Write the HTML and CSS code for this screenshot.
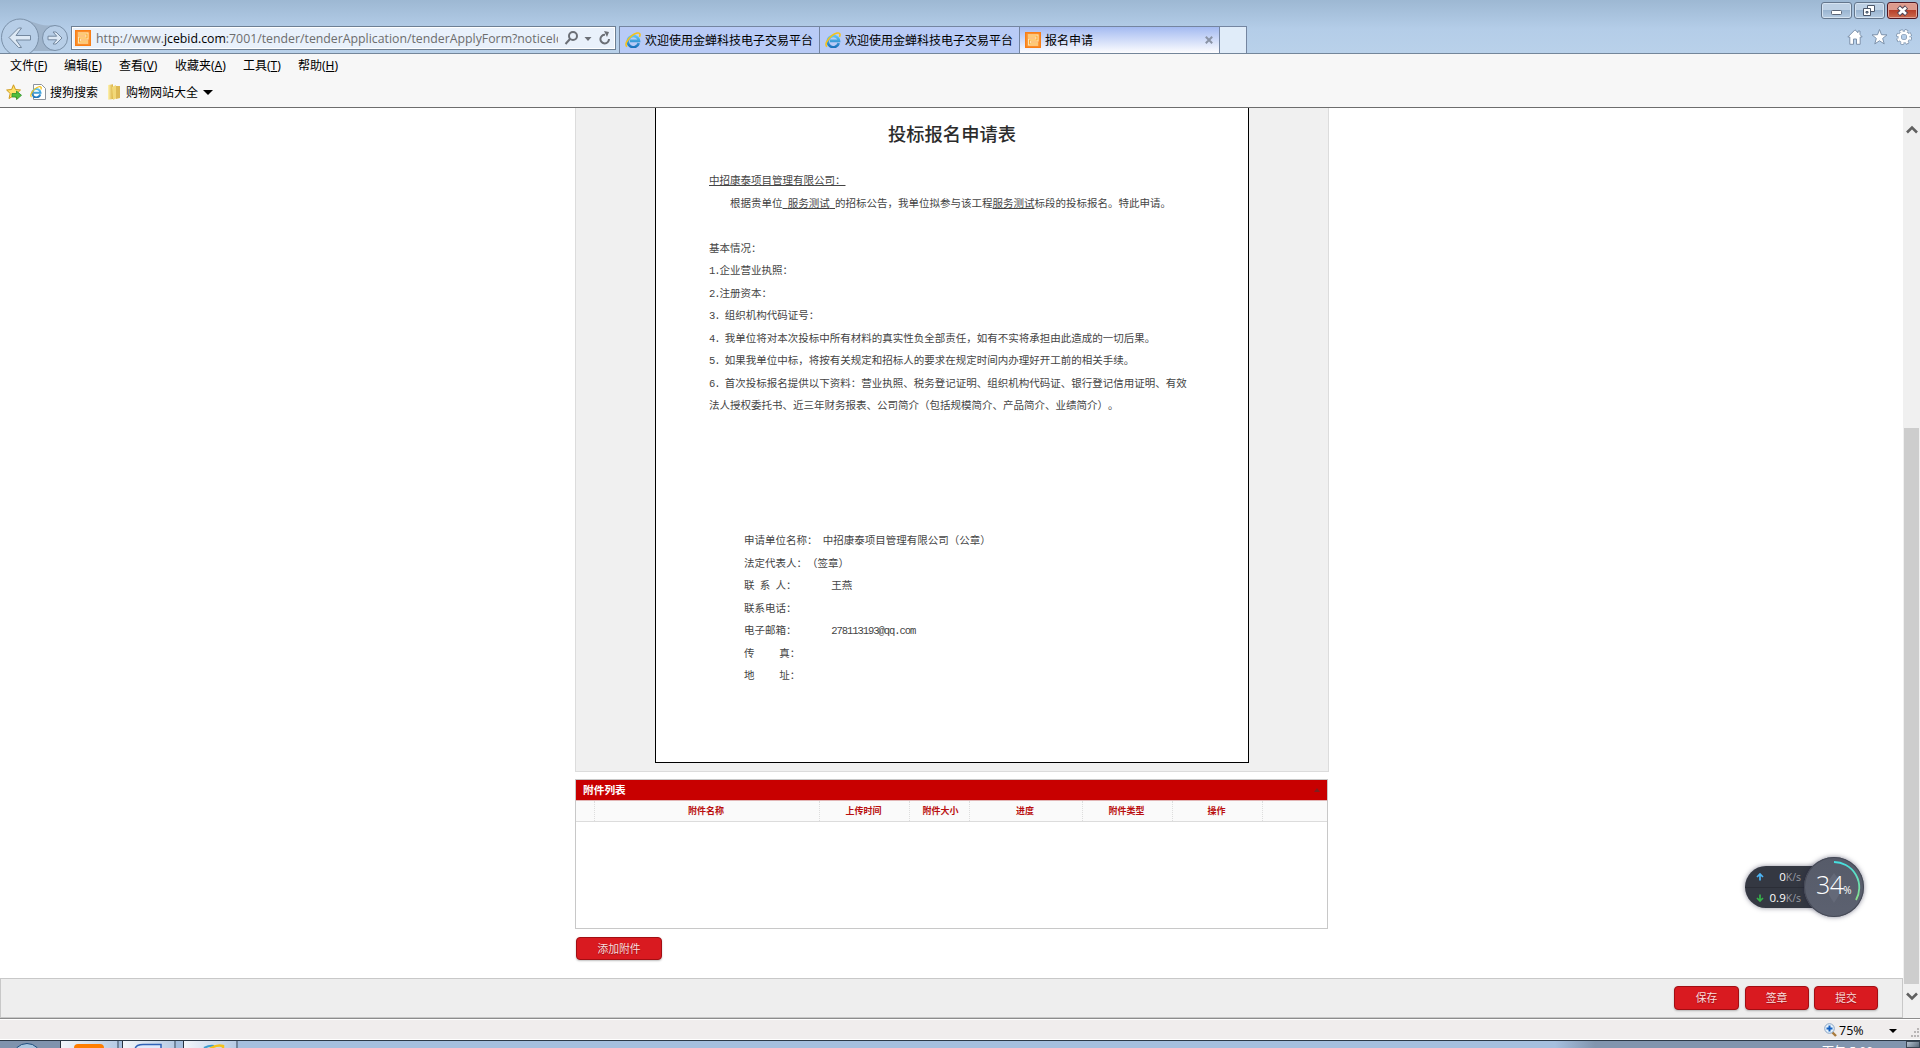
FILE: index.html
```html
<!DOCTYPE html>
<html lang="zh-CN">
<head>
<meta charset="utf-8">
<title>报名申请</title>
<link rel="stylesheet" href="styles.css">
</head>
<body>
<svg width="0" height="0" class="defs" aria-hidden="true">
  <defs>
    <linearGradient id="ieBlue" x1="0" y1="0" x2="0" y2="1"><stop offset="0" stop-color="#5cc4f2"/><stop offset="1" stop-color="#1c74bd"/></linearGradient>
    <linearGradient id="ring" x1="0" y1="0" x2="0" y2="1"><stop offset="0" stop-color="#45dfe0"/><stop offset="1" stop-color="#8be08a"/></linearGradient>
    <linearGradient id="gold" x1="0" y1="0" x2="1" y2="0"><stop offset="0" stop-color="#fff3b0"/><stop offset="1" stop-color="#d9b040"/></linearGradient>
    <symbol id="ie" viewBox="0 0 16 16">
      <path d="M13.8 11.2A5.6 5.6 0 1 1 14 8.9H5" fill="none" stroke="url(#ieBlue)" stroke-width="2.6"/>
      <path d="M2.2 14.6C-.8 13.6 2 7.4 6.6 3.8 10.2.9 14.7-.2 15 2.4c.1.8-.2 1.6-.6 2.4" fill="none" stroke="#f5c21b" stroke-width="1.6"/>
    </symbol>
    <symbol id="fav" viewBox="0 0 16 16">
      <rect width="16" height="16" fill="#f97f17"/><rect x="1.500" y="1.500" width="13" height="13" fill="#fb9a3c"/>
      <path d="M3 4h9v4H4.500v4H13" fill="none" stroke="#ffedc0" stroke-width="3"/>
      <path d="M3 4h9v4H4.500v4H13" fill="none" stroke="#fba72e" stroke-width="1.200"/>
    </symbol>
  </defs>
</svg>

<div class="screen">
  <header class="frame">
    <svg class="nav" width="71" height="53" viewBox="0 0 71 53">
      <path d="M20 19.5c14 0 17 8 35 5.500v26H33z" fill="#9fb4cb"/>
      <circle cx="20" cy="37.500" r="18.500" fill="#b7cee7" stroke="#7a90a8"/>
      <circle cx="55" cy="38" r="12.500" fill="#b7cee7" stroke="#7a90a8"/>
      <path d="M9 37.500l9.500-9.500h3L16 35.500h14.500v4.500H16l5.500 7.500h-3z" fill="#dde9f5" stroke="#74889f"/>
      <path d="M62 38l-6-6h-3l3.700 4.200H48v3.600h8.700L53 44h3z" fill="#dde9f5" stroke="#74889f"/>
    </svg>
    <div class="address">
      <svg width="16" height="16"><use href="#fav"/></svg>
      <div class="url">http://www.<b>jcebid.com</b>:7001/tender/tenderApplication/tenderApplyForm?noticeId</div>
      <svg width="50" height="18" viewBox="0 0 50 18" fill="none" stroke="#6b6f76" stroke-width="2">
        <circle cx="11" cy="7" r="4"/><path d="M8 10l-4.500 5"/><path d="M22.500 8h7L26 12z" fill="#6b6f76" stroke="none"/>
        <path d="M47 10a4.300 4.300 0 1 1-4-4.200"/><path d="M42 2l5 1-2 5z" fill="#6b6f76" stroke="none"/>
      </svg>
    </div>
    <nav class="tabs">
      <div class="tab"><svg width="16" height="16"><use href="#ie"/></svg><span>欢迎使用金蝉科技电子交易平台</span></div>
      <div class="tab"><svg width="16" height="16"><use href="#ie"/></svg><span>欢迎使用金蝉科技电子交易平台</span></div>
      <div class="tab active"><svg width="16" height="16"><use href="#fav"/></svg><span>报名申请</span>
        <svg class="close" width="8" height="8" viewBox="0 0 8 8"><path d="M.8.8l6.400 6.400M7.200.8L.8 7.200" stroke="#8a93a5" stroke-width="2"/></svg></div>
      <div class="tab new"></div>
    </nav>
    <div class="corner">
      <div class="winbtns">
        <i class="wb"><svg width="29" height="15"><rect x="9.500" y="7.500" width="10" height="4" rx="1" fill="#fff" stroke="#5b6577"/></svg></i>
        <i class="wb"><svg width="29" height="15" stroke="#4d586a"><path d="M12.500 2.500h7v6h-7z" fill="#fff"/><path d="M8.500 5.500h7v7h-7z" fill="#fff"/><path d="M11 8.500h2v1.500h-2z" fill="#8fb0d0"/></svg></i>
        <i class="wb x"><svg width="29" height="15"><path d="M10.500 4l8 7.500M18.500 4l-8 7.500" stroke="#4f4456" stroke-width="4.600"/><path d="M11 4.500l7 6.500M18 4.500L11 11" stroke="#fff" stroke-width="2.600"/></svg></i>
      </div>
      <div class="tools">
        <svg width="16" height="16" viewBox="0 0 16 16"><path d="M8 .8L.8 8h2v7.300h3.700V10h3v5.300h3.700V8h2L13 5.500V2h-2v1.700z" fill="#fff" stroke="#7d92ab"/></svg>
        <svg width="17" height="16" viewBox="0 0 16 16"><path d="M8 .5l2 5.200 5.500.2-4.300 3.500 1.500 5.500L8 11.800l-4.700 3.100 1.500-5.500L.5 5.900 6 5.700z" fill="#fff" stroke="#7d92ab"/></svg>
        <svg width="16" height="16" viewBox="0 0 16 16"><circle cx="8" cy="8" r="6.300" fill="none" stroke="#7d92ab" stroke-width="3.400" stroke-dasharray="3 1.950"/><circle cx="8" cy="8" r="4.400" fill="none" stroke="#7d92ab" stroke-width="4"/><circle cx="8" cy="8" r="6.200" fill="none" stroke="#fff" stroke-width="2" stroke-dasharray="2.400 2.470" stroke-dashoffset="-.3"/><circle cx="8" cy="8" r="4.300" fill="none" stroke="#fff" stroke-width="2.600"/></svg>
      </div>
    </div>
  </header>

  <div class="bars">
    <div class="menu"><span>文件(<u>F</u>)</span><span>编辑(<u>E</u>)</span><span>查看(<u>V</u>)</span><span>收藏夹(<u>A</u>)</span><span>工具(<u>T</u>)</span><span>帮助(<u>H</u>)</span></div>
    <div class="favs">
      <svg width="17" height="16" viewBox="0 0 17 16"><path d="M7.500.8l2 4.700 5 .5-3.800 3.500 1 5-4.200-2.600L3 14.500l1.200-5L.6 6l5-.5z" fill="#ffe36b" stroke="#cf9a1d"/><path d="M6 9.500h4.500V7l5 4.300-5 4.300V13H6z" fill="#4fbf3c" stroke="#2f8f28" stroke-width=".8"/></svg>
      <svg class="doc" width="16" height="16" viewBox="0 0 16 16"><path d="M3.500.5h8l4 4v11h-12z" fill="#fff" stroke="#8d939c"/><use href="#ie" x="0" y="2" width="12" height="12"/></svg>
      <span class="fav1">搜狗搜索</span>
      <svg class="folder" width="14" height="16" viewBox="0 0 14 16"><path d="M1 1l5-.7V15l-5 .7z" fill="url(#gold)"/><path d="M5 3l4-2 1 13-4 2z" fill="#f2d878"/><path d="M9 2h4v12l-4 1z" fill="#ddb954"/></svg>
      <span class="fav2">购物网站大全</span>
      <i class="caret"></i>
    </div>
  </div>

  <main class="view">
    <div class="page">
      <div class="scrollarea">
        <div class="sheetwrap">
          <article class="sheet">
            <h1>投标报名申请表</h1>
            <div class="text">
              <p><u>中招康泰项目管理有限公司：</u></p>
              <p class="indent">根据贵单位<u><s> </s>服务测试<s> </s></u>的招标公告，我单位拟参与该工程<u>服务测试</u>标段的投标报名。特此申请。</p>
              <p></p>
              <p>基本情况：</p>
              <p><s>1.</s>企业营业执照：</p>
              <p><s>2.</s>注册资本：</p>
              <p><s>3. </s>组织机构代码证号：</p>
              <p><s>4. </s>我单位将对本次投标中所有材料的真实性负全部责任，如有不实将承担由此造成的一切后果。</p>
              <p><s>5. </s>如果我单位中标，将按有关规定和招标人的要求在规定时间内办理好开工前的相关手续。</p>
              <p><s>6. </s>首次投标报名提供以下资料：营业执照、税务登记证明、组织机构代码证、银行登记信用证明、有效</p>
              <p>法人授权委托书、近三年财务报表、公司简介（包括规模简介、产品简介、业绩简介）。</p>
            </div>
            <div class="text sign">
              <p>申请单位名称：<s> </s>中招康泰项目管理有限公司（公章）</p>
              <p>法定代表人：（签章）</p>
              <p>联<s> </s>系<s> </s>人：<s class="gap">       </s>王燕</p>
              <p>联系电话：</p>
              <p>电子邮箱：<s class="gap">       </s><s>278113193@qq.com</s></p>
              <p>传<s class="gap">     </s>真：</p>
              <p>地<s class="gap">     </s>址：</p>
            </div>
          </article>
        </div>
        <section class="attach">
          <div class="bar">附件列表<i></i></div>
          <div class="head"><span></span><span>附件名称</span><span>上传时间</span><span>附件大小</span><span>进度</span><span>附件类型</span><span>操作</span><span></span></div>
        </section>
        <button class="btn add">添加附件</button>
      </div>
      <footer class="actions"><button class="btn b65">保存</button><button class="btn">签章</button><button class="btn">提交</button></footer>
    </div>
    <div class="scroll">
      <svg width="12" height="9" viewBox="0 0 12 9"><path d="M1 7.500l5-5 5 5" fill="none" stroke="#606060" stroke-width="2.600"/></svg>
      <div class="thumb"></div>
      <svg class="down" width="12" height="9" viewBox="0 0 12 9"><path d="M1 1.500l5 5 5-5" fill="none" stroke="#606060" stroke-width="2.600"/></svg>
    </div>
  </main>

  <div class="status">
    <svg width="13" height="14" viewBox="0 0 13 14"><path d="M8 9l4 4" stroke="#a87a3c" stroke-width="2.400"/><circle cx="5.500" cy="5.500" r="4.800" fill="#e6f2fc" stroke="#8aa4c4"/><path d="M5.500 2.500v6M2.500 5.500h6" stroke="#1560c0" stroke-width="2"/></svg>
    <span>75%</span><i class="caret sm"></i>
    <svg class="grip" width="10" height="10" fill="#b9b6b6"><path d="M7 0h2v2H7zM4 3h2v2H4zM7 3h2v2H7zM1 7h2v2H1zM4 7h2v2H4zM7 7h2v2H7z"/></svg>
  </div>
  <div class="task">
    <div class="start"><svg width="30" height="7"><ellipse cx="15" cy="15" rx="14" ry="13.500" fill="#a9c6df" stroke="#1f4d7c"/></svg></div>
    <div class="app a1"><svg width="30" height="6"><rect y="2" width="30" height="12" rx="4" fill="#ff7d00"/></svg></div>
    <div class="app a2"><svg width="30" height="6"><path d="M2 8c0-4 4-5.500 8-5.500h18V8" fill="#dfe8fb" stroke="#2f62b8" stroke-width="1.500"/></svg></div>
    <div class="app a3"><svg width="22" height="6"><path d="M1 6q6-3 10-2" stroke="#3f9fd0" stroke-width="2" fill="none"/><path d="M4 9Q12 2 20 4v4" stroke="#f5c21b" stroke-width="2.500" fill="none"/></svg></div>
    <div class="clock">下午 5:00</div>
    <div class="peek"></div>
  </div>

  <div class="meter">
    <div class="pill">
      <div><svg width="8" height="8" viewBox="0 0 8 8"><path d="M4 7.500V2M1 4l3-3 3 3" fill="none" stroke="#4db5f5" stroke-width="1.700"/></svg><span>0<em>K/s</em></span></div>
      <div><svg width="8" height="8" viewBox="0 0 8 8"><path d="M4 .5V6M1 4l3 3 3-3" fill="none" stroke="#35b34a" stroke-width="1.700"/></svg><span>0.9<em>K/s</em></span></div>
    </div>
    <div class="dial"><svg width="60" height="60" viewBox="0 0 60 60"><path d="M30 16l5 7v15l-5 8-5-8V23z" fill="#646978"/><path d="M30 5A25.500 25.500 0 0 1 52 43" fill="none" stroke="url(#ring)" stroke-width="1.800"/></svg><span>34<em>%</em></span></div>
  </div>
</div>
</body>
</html>
```

FILE: styles.css
```css
* { box-sizing: border-box; }
body { margin: 0; overflow: hidden; font-family: "Noto Sans", "Noto Sans CJK SC", sans-serif; font-size: 12px; color: #000; }
svg { display: block; flex: none; }
.defs { position: absolute; }
.screen { width: 1920px; height: 1048px; display: flex; flex-direction: column; position: relative; overflow: hidden; background: #fff; }

/* window frame */
.frame { height: 54px; flex: none; display: flex; background: linear-gradient(#9db8d3, #b4cde8 55%, #b9d1ea); border-bottom: 1px solid #74869a; }
.address { width: 545px; height: 24px; margin-top: 26px; display: flex; align-items: center; gap: 5px; padding: 0 3px; background: #e9f1fb; border: 1px solid #6d7f93; box-shadow: inset 0 0 0 1px #fff; }
.url { width: 464px; margin-right: -1px; padding-top: 2px; overflow: hidden; white-space: nowrap; font: 12.3px/20px "Open Sans", sans-serif; color: #6d6d6d; }
.url b { font-weight: 400; color: #000; }
.tabs { display: flex; margin: 26px 0 0 3px; }
.tab { width: 200px; height: 27px; display: flex; align-items: center; gap: 4px; padding-left: 5px; border: solid #7485a0; border-width: 1px 0 0 1px; background: #b9cbf6; white-space: nowrap; }
.tab.active { background: linear-gradient(#a3baf1, #fdfdff); }
.tab .close { margin: 0 6px 0 auto; }
.tab.new { width: 28px; border-right-width: 1px; background: #e0ecf9; }
.corner { margin-left: auto; padding: 2px 2px 0 0; display: flex; flex-direction: column; align-items: flex-end; }
.winbtns { display: flex; gap: 2px; }
.wb { width: 31px; height: 17px; border: 1px solid #64768c; border-radius: 3px; box-shadow: inset 0 0 0 1px #d5e3f1; background: linear-gradient(#bdd0e4 50%, #9ab5d1 50%, #b5cbe2); }
.wb.x { border-color: #501722; box-shadow: inset 0 0 0 1px #e2a498; background: linear-gradient(#dd9a8d 50%, #b8402b 50%, #cc6b4f); }
.tools { display: flex; gap: 8px; margin: 10px 6px 0 0; }

/* menu and favourites bars */
.bars { height: 54px; flex: none; background: #f7f7f7; border-bottom: 1px solid #6d6d6d; }
.menu { height: 25px; padding: 0 0 3px 10px; display: grid; grid-template-columns: 54px 55px 56px 68px 55px 60px; align-items: center; white-space: nowrap; }
.favs { height: 26px; display: flex; align-items: center; padding-left: 6px; }
.doc { margin-left: 7px; }
.fav1 { margin-left: 4px; width: 48px; }
.folder { margin-left: 9px; }
.fav2 { margin-left: 5px; width: 72px; white-space: nowrap; }
.caret { border: 5px solid transparent; border-top-color: #000; border-bottom: 0; margin-left: 5px; }

/* page viewport */
.view { height: 910px; flex: none; display: flex; }
.page { width: 1903px; display: flex; flex-direction: column; }
.scrollarea { height: 870px; padding-left: 575px; }
.sheetwrap { width: 754px; height: 664px; padding: 0 79px 0 80px; background: #f0f0f0; border: 1px solid #dcdcdc; border-top: 0; }
.sheet { width: 594px; height: 655px; margin-left: -1px; border: 1px solid #000; border-top: 0; background: #fff; overflow: hidden; }
.sheet h1 { margin: 12px 0 0; height: 26px; font: 500 18.3px/26px "Noto Sans CJK SC", sans-serif; color: #2c2c2c; text-align: center; }
.text { margin: 23px 0 0 53px; font: 10.5px/22.5px "Noto Sans CJK SC", sans-serif; color: #444; text-spacing-trim: space-all; }
.text p { margin: 0; height: 22.5px; white-space: pre; }
.text .indent { padding-left: 21px; }
.text s { text-decoration: none; font-family: "Liberation Mono", monospace; letter-spacing: -1.05px; }
.text .gap { letter-spacing: -1.35px; }
.sign { margin: 112.5px 0 0 88px; }

.attach { width: 753px; height: 150px; margin-top: 7px; border: 1px solid #c8c8c8; }
.bar { height: 21px; display: flex; align-items: center; justify-content: space-between; padding: 0 7px; background: #c80000; color: #fff; font: 700 10.7px/20px "Noto Sans CJK SC", sans-serif; border-bottom: 1px solid #e2b5b5; }
.bar i { border: 3px solid transparent; border-top: 0; border-bottom: 4px solid #7c2020; }
.head { height: 21px; display: grid; grid-template-columns: 18px 225px 90px 60px 113px 90px 90px 1fr; background: #fafafa; border-bottom: 1px solid #dcdcdc; font: 700 9px/20px "Noto Sans CJK SC", sans-serif; color: #b90f0f; text-align: center; }
.head span + span { border-left: 1px dotted #ddd; }
.head span:nth-child(n+2) { padding-right: 2px; }
.head span:nth-child(4) { padding: 0 0 0 2px; }

.btn { width: 64px; height: 24px; padding: 0 0 2px; border: 1px solid #a20e13; border-radius: 4px; background: #d91a20; box-shadow: 0 1px 2px rgba(0,0,0,.25); color: #fbdcdc; font: 10.8px/20px "Noto Sans CJK SC", sans-serif; text-shadow: 0 1px 1px rgba(0,0,0,.3); }
.btn.b65 { width: 65px; }
.btn.add { display: block; width: 86px; height: 23px; margin: 8px 0 0 1px; }
.actions { height: 40px; display: flex; gap: 5.5px; justify-content: flex-end; padding: 7px 24px 0 0; background: #eee; border: 1px solid #c8c8c8; }

.scroll { width: 17px; padding: 17px 1px 0; background: #f0f0f0; display: flex; flex-direction: column; align-items: center; }
.thumb { width: 15px; height: 556px; margin-top: 294px; background: #cdcdcd; }
.down { margin-top: 8px; }

/* status bar and taskbar */
.status { height: 22px; flex: none; display: flex; align-items: center; padding-left: 1824px; background: #f0eded; border-top: 1px solid #8c8c8c; box-shadow: inset 0 1px #fff, inset 0 -1px #fff; }
.status span { width: 26px; margin-left: 2px; padding-top: 2px; font: 12.5px/18px "Open Sans", sans-serif; }
.caret.sm { border-width: 4px; border-bottom: 0; margin: 2px 0 0 24px; }
.grip { margin: 6px 0 0 13px; }
.task { height: 8px; flex: none; display: flex; overflow: hidden; border-top: 1px solid #2c3947; background: linear-gradient(90deg, #7f93ad 60px, #a5bfde 60px, #a5bfde 1555px, #8195ae 1595px); }
.start { width: 60px; padding-left: 12px; padding-top: 1px; }
.app { height: 7px; padding-top: 1px; border: solid #28323f; border-width: 0 1px; border-right: 2px solid #71859c; background: linear-gradient(90deg, #f2f6fb, #b7cbe4); }
.a1 { width: 59px; padding-left: 13px; }
.a2 { width: 54px; margin-left: 3px; padding-left: 10px; }
.a3 { width: 55px; margin-left: 7px; padding-left: 19px; }
.clock { margin-left: auto; margin-right: 33px; color: #fff; font-size: 12px; line-height: 18px; padding-top: 2px; white-space: nowrap; }
.peek { width: 14px; border: 1px solid #3a4654; background: linear-gradient(135deg, #b5c2d0, #596878); }

/* floating network meter */
.meter { position: absolute; left: 1745px; top: 857px; width: 119px; height: 60px; display: flex; align-items: center; }
.pill { width: 90px; height: 42px; border-radius: 21px; background: #343842; box-shadow: 0 0 5px rgba(30,30,60,.5); font: 11.5px/21px "Open Sans", sans-serif; color: #fff; }
.pill div { height: 21px; display: flex; align-items: center; padding-left: 11px; }
.pill div + div { border-top: 1px solid #2b2e37; }
.pill span { width: 37px; text-align: right; white-space: nowrap; }
.pill em { font-style: normal; font-size: 10.5px; color: #989ba3; }
.dial { width: 60px; height: 60px; margin-left: -31px; border-radius: 50%; background: linear-gradient(#565b69, #5c6170); box-shadow: 0 0 5px rgba(30,30,60,.55), inset 0 0 0 1px #464a57; display: grid; }
.dial > * { grid-area: 1 / 1; }
.dial span { align-self: center; padding-left: 12px; font: 300 25px/30px "Open Sans", sans-serif; letter-spacing: -.6px; color: #fff; white-space: nowrap; }
.dial em { font-style: normal; font-size: 10px; font-weight: 400; }
```
